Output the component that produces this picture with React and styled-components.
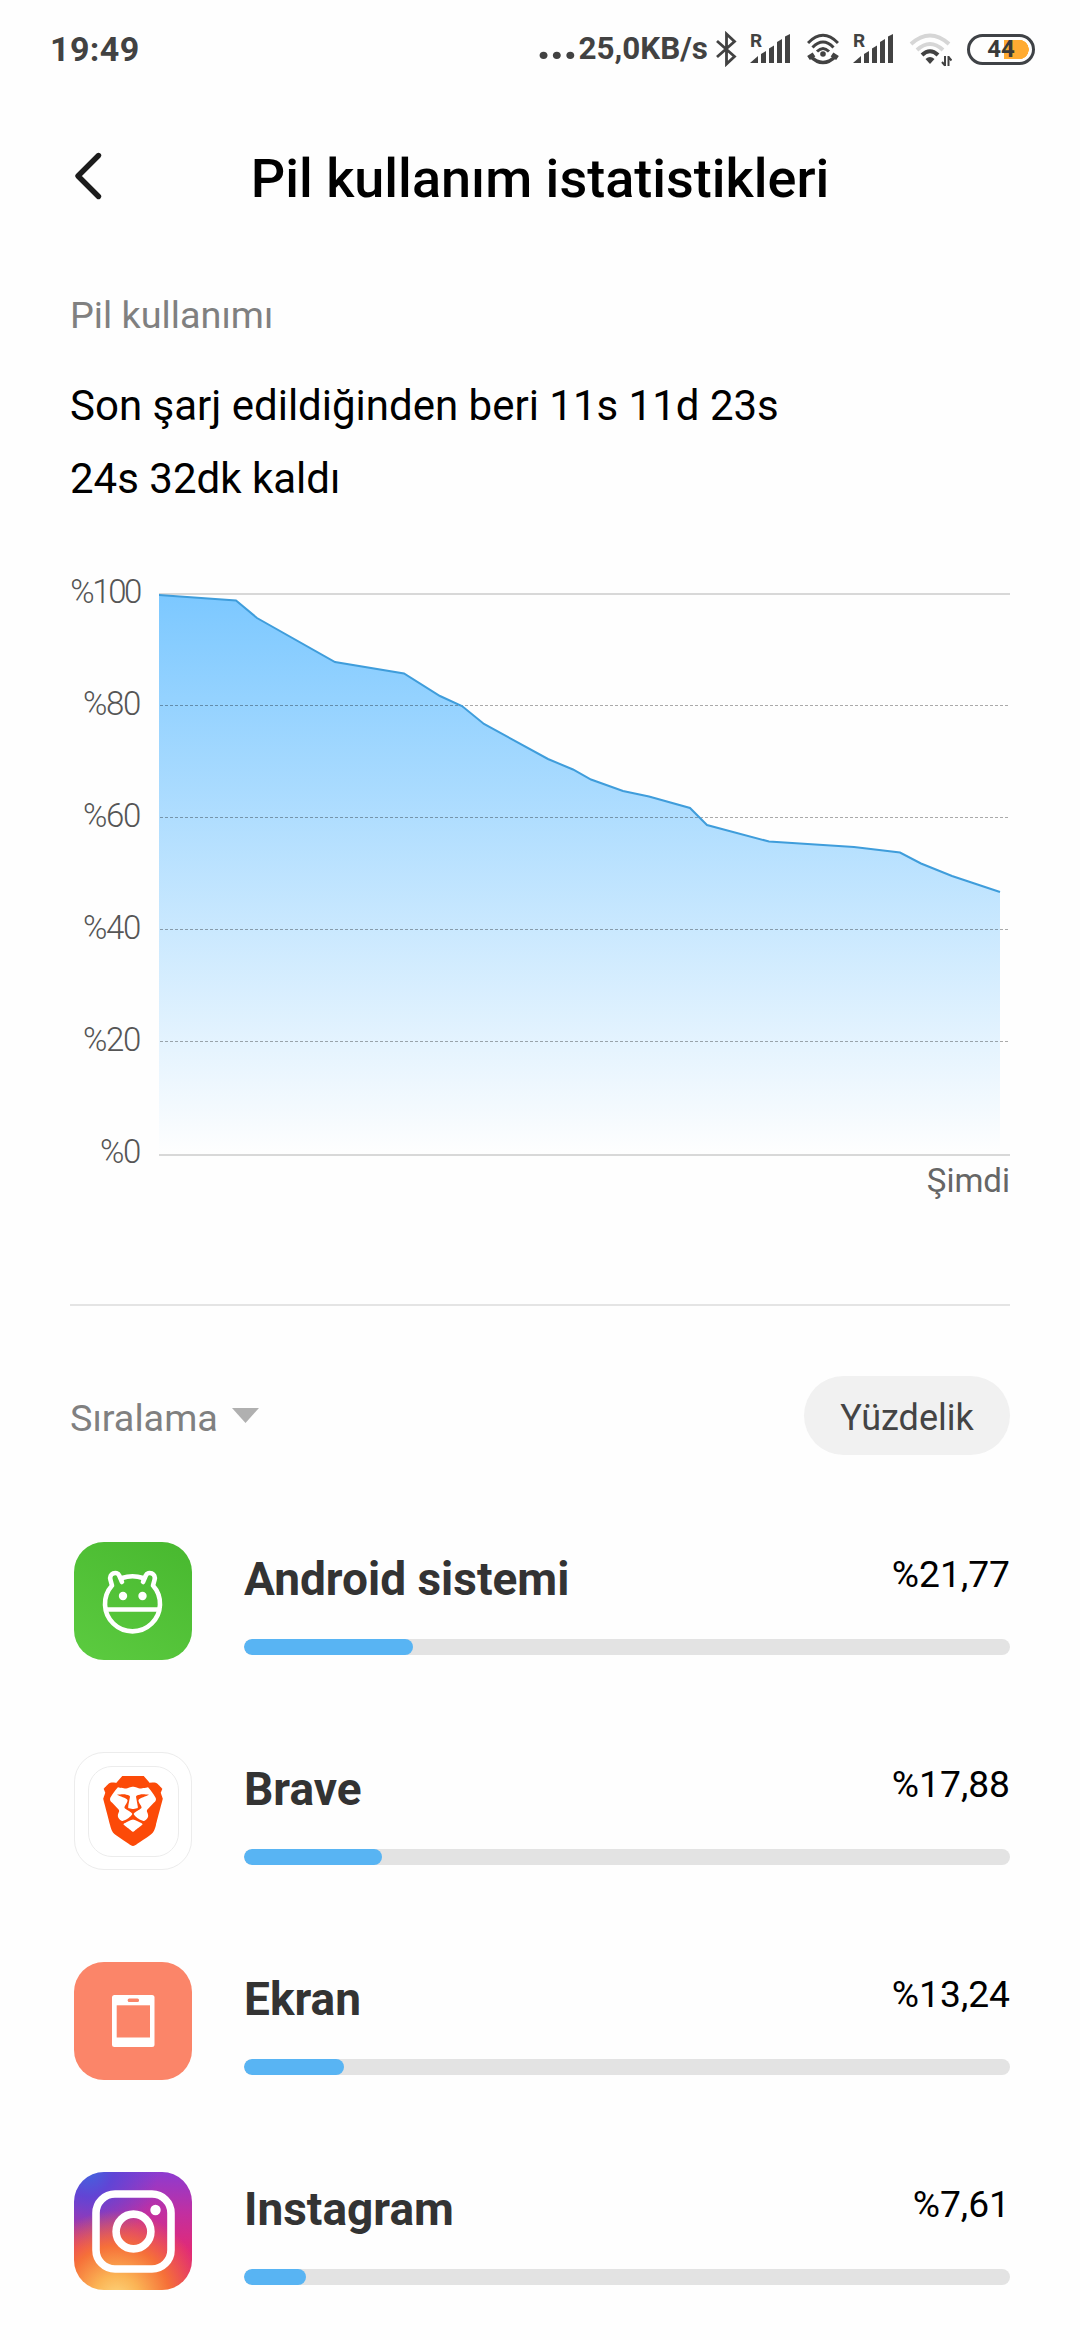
import React from "react";
import styled, { createGlobalStyle } from "styled-components";
import { SiBrave } from "react-icons/si";

const GlobalStyle = createGlobalStyle`
  body {
    margin: 0;
    background: #fefefe;
    font-family: Roboto, "Noto Sans", sans-serif;
    -webkit-font-smoothing: antialiased;
  }
`;

const Screen = styled.div`
  width: 1080px;
  height: 2340px;
  overflow: hidden;
  background: #fefefe;
  color: #000;
`;

const StatusBar = styled.div`
  display: flex;
  align-items: center;
  justify-content: space-between;
  box-sizing: border-box;
  height: 98px;
  padding: 0 45px 0 50px;
  color: #424242;
`;

const Clock = styled.span`
  font-size: 34px;
  font-weight: 700;
  line-height: 40px;
  letter-spacing: 0.4px;
`;

const StatusItems = styled.div`
  display: flex;
  align-items: center;
`;

const Speed = styled.span`
  display: flex;
  align-items: baseline;
  margin-right: 8px;
  font-size: 31.4px;
  font-weight: 700;
  line-height: 40px;
`;

const Ellipsis = styled.span`
  margin-right: 2px;
  font-size: 50px;
  line-height: 27px;
  letter-spacing: -1.2px;
`;

const StatusGlyph = styled.svg`
  flex: none;
  display: block;
  width: ${(p) => p.$w}px;
  height: 36px;
  margin-right: ${(p) => p.$gap || 0}px;
`;

const SignalBox = styled.div`
  position: relative;
  margin-right: ${(p) => p.$gap}px;
`;

const Roaming = styled.span`
  position: absolute;
  left: 0;
  top: 0;
  font-size: 19px;
  font-weight: 700;
  line-height: 20px;
`;

const Battery = styled.div`
  display: flex;
  align-items: center;
  justify-content: center;
  box-sizing: border-box;
  width: 68px;
  height: 31px;
  border: 3px solid #3f4246;
  border-radius: 16px;
  background: radial-gradient(circle at 0 50%, #ffab32 9.5px, transparent 10px) right 3px center / 10px 19px no-repeat,
    linear-gradient(#ffab32, #ffab32) right 12px center / 16px 19px no-repeat;
  color: #3a3a3a;
  font-size: 24px;
  font-weight: 700;
  line-height: 25px;
`;

const Header = styled.header`
  display: grid;
  grid-template-columns: 1fr auto 1fr;
  align-items: center;
  box-sizing: border-box;
  height: 162px;
  padding: 0 70px;
`;

const BackButton = styled.button`
  width: 40px;
  height: 56px;
  margin: 0 0 6px;
  padding: 0;
  border: 0;
  background: none;
`;

const Title = styled.h1`
  margin: 0;
  font-size: 54px;
  font-weight: 500;
  line-height: 64px;
  white-space: nowrap;
`;

const Content = styled.main`
  display: flex;
  flex-direction: column;
  padding: 33px 70px 0;
`;

const SectionLabel = styled.div`
  color: #808080;
  font-size: 37.8px;
  line-height: 44px;
`;

const Summary = styled.p`
  margin: 32px 0 1px;
  font-size: 42px;
  line-height: 73px;
`;

const Chart = styled.section`
  display: grid;
  grid-template-columns: 70px 851px;
  column-gap: 19px;
  margin-top: 56px;
  color: #666;
  font-size: 33px;
  line-height: 40px;
`;

const Axis = styled.div`
  display: flex;
  flex-direction: column;
  align-items: flex-end;
  gap: 72px;
  height: 600px;
  color: #555;
  font-weight: 300;
`;

const Tick = styled.span`
  letter-spacing: ${(p) => p.$tracking}px;
`;

const Plot = styled.div`
  display: flex;
  flex-direction: column;
  align-items: flex-end;
  gap: 5px;
  padding-top: 21px;
`;

const PlotArea = styled.svg`
  display: block;
  width: 851px;
  height: 563px;
`;

const Divider = styled.hr`
  width: 100%;
  height: 2px;
  margin: 103px 0 0;
  border: 0;
  background: #e4e4e4;
`;

const SortRow = styled.div`
  display: flex;
  align-items: center;
  justify-content: space-between;
  margin-top: 70px;
`;

const SortButton = styled.button`
  display: flex;
  align-items: center;
  gap: 14px;
  padding: 5px 0 0;
  border: 0;
  background: none;
  color: #808080;
  font: 400 37.8px/44px Roboto, "Noto Sans", sans-serif;
`;

const Caret = styled.svg`
  width: 27px;
  height: 15px;
  margin-top: -5px;
`;

const Pill = styled.button`
  box-sizing: border-box;
  width: 206px;
  height: 79px;
  padding: 4px 0 0;
  border: 0;
  border-radius: 40px;
  background: #f1f1f1;
  color: #444;
  font: 400 36px/44px Roboto, "Noto Sans", sans-serif;
`;

const AppList = styled.ul`
  display: flex;
  flex-direction: column;
  gap: 92px;
  margin: 87px 0 0;
  padding: 0 0 0 4px;
  list-style: none;
`;

const AppRow = styled.li`
  display: flex;
  gap: 52px;
  height: 118px;
`;

const AppIcon = styled.div`
  flex: none;
  display: flex;
  align-items: center;
  justify-content: center;
  box-sizing: border-box;
  width: 118px;
  height: 118px;
  overflow: hidden;
  border: ${(p) => p.$border || "0"};
  border-radius: 30px;
  background: ${(p) => p.$bg};
`;

const BravePlate = styled.div`
  display: flex;
  align-items: center;
  justify-content: center;
  box-sizing: border-box;
  width: 91px;
  height: 91px;
  border: 1px solid #ececec;
  border-radius: 24px;
  color: #fc4a08;
`;

const IconArt = styled.svg`
  display: block;
  width: 118px;
  height: 118px;
`;

const AppBody = styled.div`
  flex: 1;
  padding-top: 8px;
`;

const AppHead = styled.div`
  display: flex;
  justify-content: space-between;
  height: 60px;
`;

const AppName = styled.span`
  color: #333;
  font-size: 46px;
  font-weight: 700;
  line-height: 58px;
`;

const AppShare = styled.span`
  font-size: 37.2px;
  line-height: 48px;
`;

const Track = styled.div`
  height: 16px;
  margin-top: 29px;
  overflow: hidden;
  border-radius: 8px;
  background: #e3e3e3;
`;

const Fill = styled.div`
  width: ${(p) => p.$value}px;
  height: 100%;
  border-radius: 8px;
  background: #58b4f3;
`;

const levels = [
  [159, 595], [236, 600.5], [257, 618], [335, 662], [404, 673.5], [440, 696],
  [462, 706], [484, 724], [548, 759], [573, 769.5], [591, 779.5], [623, 791],
  [649, 796.5], [690, 808], [707, 825], [769, 841.5], [854, 847], [900, 852.5],
  [921, 863.5], [952, 876], [1000, 892],
];
const linePoints = levels.map((p) => p.join(",")).join(" ");
const areaPoints = `159,1154 ${linePoints} 1000,1154`;

function Signal({ gap }) {
  return (
    <SignalBox $gap={gap}>
      <Roaming>R</Roaming>
      <StatusGlyph $w={41} viewBox="0 0 41 36" fill="#424242">
        <path d="M0 32 L8 25 V32z" />
        <path d="M11 23 L16 20 V32 H11z" />
        <path d="M19 17.5 L24 14.5 V32 H19z" />
        <path d="M27 11 L32 8 V32 H27z" />
        <path d="M35 5.5 L40 3 V32 H35z" />
      </StatusGlyph>
    </SignalBox>
  );
}

function BatteryChart() {
  return (
    <Chart>
      <Axis>
        {[100, 80, 60, 40, 20, 0].map((v) => (
          <Tick key={v} $tracking={v === 100 ? -2.4 : -1.3}>%{v}</Tick>
        ))}
      </Axis>
      <Plot>
        <PlotArea viewBox="159 593 851 563">
          <defs>
            <linearGradient id="level" x1="0" y1="595" x2="0" y2="1154" gradientUnits="userSpaceOnUse">
              <stop offset="0" stopColor="#7cc8ff" />
              <stop offset="1" stopColor="#fefefe" />
            </linearGradient>
          </defs>
          <rect x="159" y="593" width="851" height="2" fill="#d8d8d8" />
          <polygon points={areaPoints} fill="url(#level)" />
          {[705, 817, 929, 1041].map((y) => (
            <line key={y} x1="160" x2="1009" y1={y + 0.5} y2={y + 0.5} stroke="#000" strokeOpacity="0.33" strokeDasharray="3 2" />
          ))}
          <polyline points={linePoints} fill="none" stroke="#3f9ddb" strokeWidth="2" />
          <rect x="159" y="1154" width="851" height="2" fill="#d8d8d8" />
        </PlotArea>
        <span>Şimdi</span>
      </Plot>
    </Chart>
  );
}

function AndroidIcon() {
  return (
    <AppIcon $bg="linear-gradient(30deg, #5ccb40, #48b82f)">
      <IconArt viewBox="0 0 118 118" fill="none" stroke="#fff" strokeWidth="4.6" strokeLinecap="round" strokeLinejoin="round">
        <path d="M48 40 L45.2 33.5 C43 28.5 34.5 31.5 36.5 38 L38 43.5 A27.5 27.5 0 1 0 79 43.5 L80.5 38 C82.5 31.5 74 28.5 71.8 33.5 L69 40" />
        <path d="M48 36 Q58.5 32.5 69 36" />
        <path d="M32 67.5H85" strokeLinecap="butt" />
        <circle cx="49" cy="54" r="4.2" fill="#fff" stroke="none" />
        <circle cx="68.5" cy="54" r="4.2" fill="#fff" stroke="none" />
      </IconArt>
    </AppIcon>
  );
}

function BraveIcon() {
  return (
    <AppIcon $bg="#fff" $border="1px solid #ececec">
      <BravePlate>
        <SiBrave size={70} />
      </BravePlate>
    </AppIcon>
  );
}

function ScreenIcon() {
  return (
    <AppIcon $bg="#fb8569">
      <IconArt viewBox="0 0 118 118">
        <rect x="38" y="33" width="42.5" height="52" rx="2.5" fill="#fff" />
        <rect x="42.7" y="43.3" width="33.3" height="32.2" fill="#fb8569" />
        <rect x="53.7" y="36.5" width="11.3" height="3.6" rx="1.5" fill="#fb8569" />
      </IconArt>
    </AppIcon>
  );
}

const instagramBg = [
  "radial-gradient(circle at 36% 108%, #fdd880 0%, #fbb455 16%, rgba(248,120,50,0.9) 36%, rgba(240,60,80,0) 60%)",
  "radial-gradient(ellipse at 12% -6%, #3c6be0 0%, rgba(90,70,215,0.9) 18%, rgba(150,50,190,0) 48%)",
  "linear-gradient(to bottom, #8d3bd0 0%, #c22fa0 35%, #e02a78 65%, #e22a70 100%)",
].join(", ");

function InstagramIcon() {
  return (
    <AppIcon $bg={instagramBg}>
      <IconArt viewBox="0 0 118 118" fill="none" stroke="#fff" strokeWidth="7.6">
        <rect x="22" y="22" width="75" height="75" rx="19" />
        <circle cx="59.5" cy="59.5" r="17.4" />
        <circle cx="81.5" cy="38" r="5.2" fill="#fff" stroke="none" />
      </IconArt>
    </AppIcon>
  );
}

const apps = [
  { name: "Android sistemi", share: "%21,77", fill: 169, Icon: AndroidIcon },
  { name: "Brave", share: "%17,88", fill: 138, Icon: BraveIcon },
  { name: "Ekran", share: "%13,24", fill: 100, Icon: ScreenIcon },
  { name: "Instagram", share: "%7,61", fill: 62, Icon: InstagramIcon },
];

export default function App() {
  return (
    <Screen>
      <GlobalStyle />
      <StatusBar>
        <Clock>19:49</Clock>
        <StatusItems>
          <Speed>
            <Ellipsis>...</Ellipsis>25,0KB/s
          </Speed>
          <StatusGlyph $w={21} $gap={13} viewBox="0 0 21 36" fill="none" stroke="#424242" strokeWidth="2.8">
            <path d="M1 10 L18.5 25.5 L10.5 33 V3 L18.5 10.5 L1 26" />
          </StatusGlyph>
          <Signal gap={16} />
          <StatusGlyph $w={32} $gap={14} viewBox="0 0 32 36" fill="none" stroke="#424242" strokeWidth="3">
            <path d="M1 12 Q16 -3.5 31 12" />
            <path d="M5.5 16.5 Q16 5.5 26.5 16.5" />
            <path d="M10 20.5 Q16 14.5 22 20.5" />
            <circle cx="16" cy="23" r="2.8" fill="#424242" stroke="none" />
            <path d="M3 25 Q16 38 29 25" strokeWidth="3.4" />
            <path d="M1.5 27 L7 23.5 M30.5 27 L25 23.5" strokeWidth="5" />
          </StatusGlyph>
          <Signal gap={15} />
          <StatusGlyph $w={43} $gap={15} viewBox="0 0 43 36" fill="none" stroke="#424242" strokeWidth="4">
            <path d="M2 13 Q21 -4 40 13" stroke="#d6d6d6" />
            <path d="M8 19 Q21 7 34 19" stroke="#d6d6d6" />
            <path d="M13 24 Q21 16.5 29 24" />
            <path d="M21 33 L16.5 28 Q21 24 25.5 28z" fill="#424242" stroke="none" />
            <path d="M36 35 V25 M33 31 L36 34.5 M39.5 25 V35 M39.5 26 L42.5 29.5" strokeWidth="2" />
          </StatusGlyph>
          <Battery>44</Battery>
        </StatusItems>
      </StatusBar>
      <Header>
        <BackButton aria-label="Geri">
          <svg width="40" height="56" viewBox="0 0 40 56" fill="none" stroke="#1c1c1c" strokeWidth="5.4" strokeLinecap="round" strokeLinejoin="round">
            <path d="M28.5 7.5 L8 28 L28.5 48.5" />
          </svg>
        </BackButton>
        <Title>Pil kullanım istatistikleri</Title>
      </Header>
      <Content>
        <SectionLabel>Pil kullanımı</SectionLabel>
        <Summary>
          Son şarj edildiğinden beri 11s 11d 23s
          <br />
          24s 32dk kaldı
        </Summary>
        <BatteryChart />
        <Divider />
        <SortRow>
          <SortButton>
            Sıralama
            <Caret viewBox="0 0 27 15">
              <path d="M0 0H27L13.5 15z" fill="#b0b0b0" />
            </Caret>
          </SortButton>
          <Pill>Yüzdelik</Pill>
        </SortRow>
        <AppList>
          {apps.map(({ name, share, fill, Icon }) => (
            <AppRow key={name}>
              <Icon />
              <AppBody>
                <AppHead>
                  <AppName>{name}</AppName>
                  <AppShare>{share}</AppShare>
                </AppHead>
                <Track>
                  <Fill $value={fill} />
                </Track>
              </AppBody>
            </AppRow>
          ))}
        </AppList>
      </Content>
    </Screen>
  );
}
